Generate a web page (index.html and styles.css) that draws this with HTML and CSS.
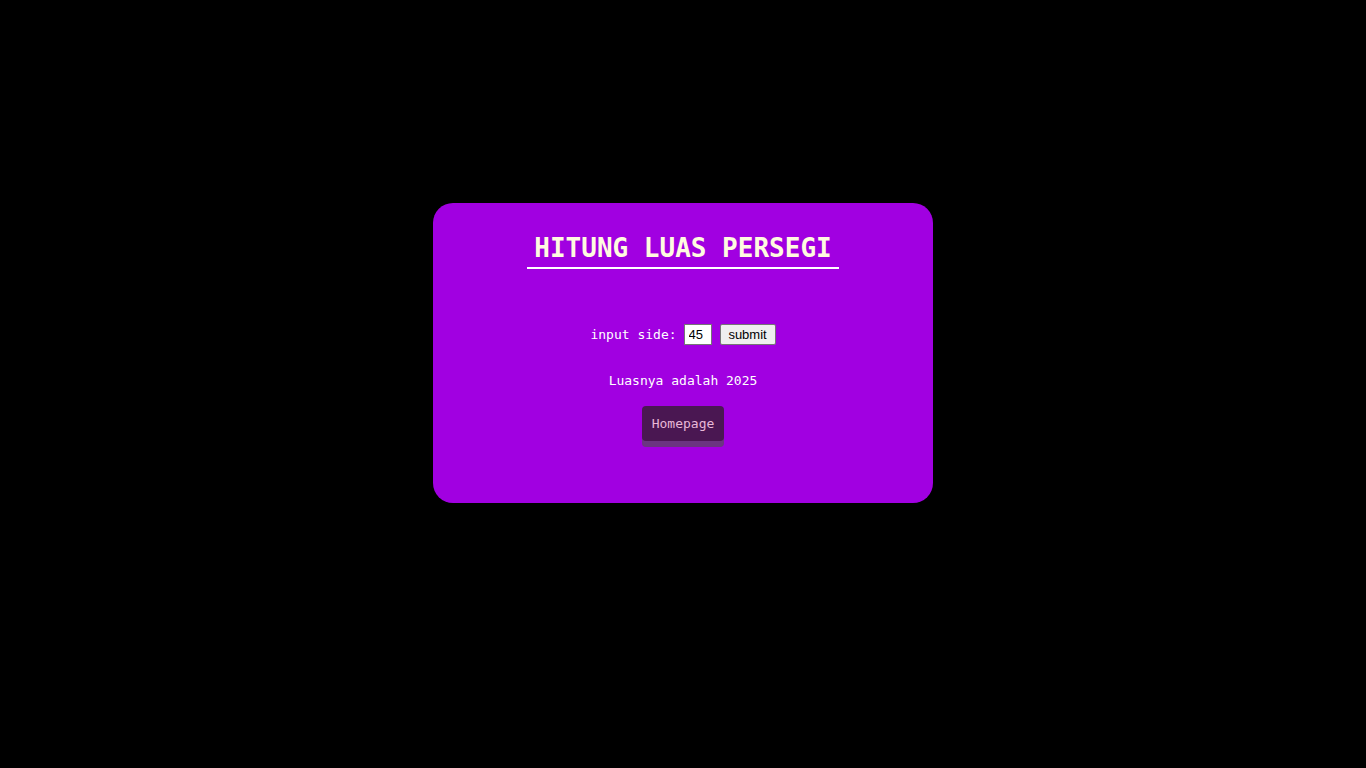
FILE: index.html
```html
<!DOCTYPE html>
<html>
<head>
<meta charset="utf-8">
<title>Hitung Luas Persegi</title>
<link rel="stylesheet" href="styles.css">
</head>
<body>
<main class="card">
  <h1 class="title">HITUNG LUAS PERSEGI</h1>
  <form class="form">
    <label class="label" for="side">input side:</label>
    <input class="field" id="side" type="text" value="45">
    <button class="submit" type="button">submit</button>
  </form>
  <p class="result">Luasnya adalah 2025</p>
  <a class="home" href="#">Homepage</a>
</main>
</body>
</html>
```
FILE: styles.css
```css
html, body {
  margin: 0;
  padding: 0;
  background: #000;
}
body {
  min-height: 768px;
  font-family: "DejaVu Sans Mono", monospace;
}
.card {
  width: 500px;
  height: 300px;
  box-sizing: border-box;
  margin: 203px auto 0;
  background: #a100e1;
  border-radius: 20px;
  display: flex;
  flex-direction: column;
  align-items: center;
  padding-top: 28px;
}
.title {
  margin: 0;
  font-size: 26px;
  font-weight: bold;
  color: #fffbe0;
  line-height: 34px;
  padding: 0 7.5px 2px;
  border-bottom: 2px solid #fff;
}
.form {
  margin-top: 55px;
  display: flex;
  align-items: center;
  height: 21px;
}
.label {
  font-size: 13px;
  color: #fff;
  margin-right: 7px;
}
.field {
  width: 28px;
  height: 21px;
  box-sizing: border-box;
  border: 1px solid #767676;
  padding: 0 4px;
  font-family: "Liberation Sans", Arial, sans-serif;
  font-size: 13px;
  background: #fff;
  color: #000;
  margin: 0 8px 0 0;
}
.submit {
  width: 56px;
  height: 21px;
  box-sizing: border-box;
  border: 1px solid #767676;
  border-radius: 2px;
  background: #efefef;
  font-family: "Liberation Sans", Arial, sans-serif;
  font-size: 13px;
  color: #000;
  padding: 0;
}
.result {
  margin: 27px 0 0;
  font-size: 13px;
  line-height: 17px;
  color: #fff;
}
.home {
  margin-top: 17px;
  width: 82px;
  height: 35px;
  box-sizing: border-box;
  display: flex;
  align-items: center;
  justify-content: center;
  background: #4a1752;
  color: #e8b8d8;
  font-size: 13px;
  text-decoration: none;
  border-radius: 4px;
  box-shadow: 0 6px 0 #6b3581;
}
```
